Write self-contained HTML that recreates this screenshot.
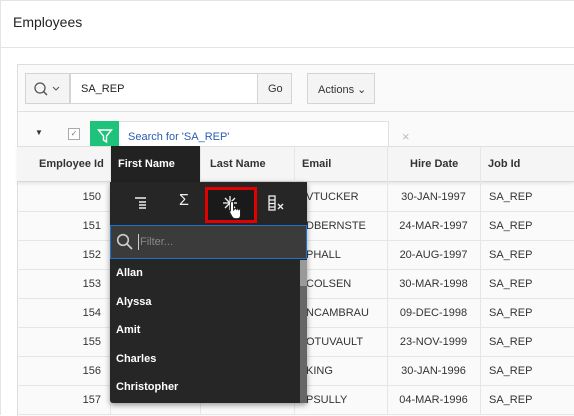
<!DOCTYPE html>
<html><head><style>
body{margin:0;width:574px;height:415px;overflow:hidden;background:#fff;font-family:"Liberation Sans",sans-serif;font-size:11px;color:#333;position:relative}
.a{position:absolute}
.t{white-space:nowrap}
</style></head><body>
<div class="a" style="left:0;top:0;width:574px;height:1px;background:#e4e4e4"></div>
<div class="a" style="left:0;top:0;width:1px;height:415px;background:#e4e4e4"></div>
<div class="a t" style="left:13px;top:14px;font-size:14px;color:#222">Employees</div>
<div class="a" style="left:0;top:47px;width:574px;height:1px;background:#e4e4e4"></div>
<div class="a" style="left:17px;top:64px;width:557px;height:351px;border-left:1px solid #ddd;border-top:1px solid #ddd;background:#fafafa"></div>
<div class="a" style="left:25px;top:73px;width:45px;height:31px;background:#f4f4f4;border:1px solid #d4d4d4;box-sizing:border-box"></div>
<svg class="a" style="left:33px;top:81px" width="30" height="16"><circle cx="7" cy="7" r="5" fill="none" stroke="#555" stroke-width="1.3"/><line x1="10.5" y1="10.5" x2="14" y2="14" stroke="#555" stroke-width="1.5"/><polyline points="20,6 23,9 26,6" fill="none" stroke="#555" stroke-width="1"/></svg>
<div class="a" style="left:70px;top:73px;width:188px;height:31px;background:#fff;border:1px solid #d4d4d4;box-sizing:border-box"></div>
<div class="a t" style="left:81px;top:83px;font-size:11px;color:#222">SA_REP</div>
<div class="a" style="left:257px;top:73px;width:35px;height:31px;background:#f4f4f4;border:1px solid #d4d4d4;box-sizing:border-box"></div>
<div class="a t" style="left:268px;top:83px">Go</div>
<div class="a" style="left:307px;top:73px;width:68px;height:31px;background:#f4f4f4;border:1px solid #d4d4d4;box-sizing:border-box"></div>
<div class="a t" style="left:318px;top:83px">Actions &#8964;</div>
<div class="a" style="left:17px;top:111px;width:557px;height:1px;background:#e0e0e0"></div>
<div class="a t" style="left:35px;top:128px;font-size:8px;color:#333">&#9660;</div>
<div class="a" style="left:68px;top:128px;width:12px;height:12px;border:1px solid #aaa;box-sizing:border-box;background:#fff;font-size:8px;line-height:10px;text-align:center;color:#777">&#10003;</div>
<div class="a" style="left:90px;top:121px;width:29px;height:30px;background:#1fc27a"></div>
<svg class="a" style="left:97px;top:128px" width="16" height="16"><path d="M1.5 2h13l-5 6v6l-3-2v-4z" fill="none" stroke="#fff" stroke-width="1.4"/></svg>
<div class="a" style="left:119px;top:121px;width:270px;height:30px;background:#fff;border:1px solid #e0e0e0;border-left:none;box-sizing:border-box"></div>
<div class="a t" style="left:128px;top:131px;color:#2a5db0">Search for 'SA_REP'</div>
<div class="a t" style="left:402px;top:129px;color:#bbb;font-size:13px">&#215;</div>
<div class="a" style="left:17px;top:146px;width:557px;height:36px;background:#f5f5f5;border-top:1px solid #e0e0e0;border-bottom:1px solid #d8d8d8;box-sizing:border-box;box-shadow:0 2px 3px rgba(0,0,0,.08)"></div>
<div class="a" style="left:110px;top:146px;width:90px;height:36px;background:#222"></div>
<div class="a t" style="left:39px;top:158px;font-weight:bold;color:#333">Employee Id</div>
<div class="a t" style="left:118px;top:158px;font-weight:bold;color:#fff">First Name</div>
<div class="a t" style="left:210px;top:158px;font-weight:bold">Last Name</div>
<div class="a t" style="left:302px;top:158px;font-weight:bold">Email</div>
<div class="a t" style="left:410px;top:158px;font-weight:bold">Hire Date</div>
<div class="a t" style="left:488px;top:158px;font-weight:bold">Job Id</div>
<div class="a" style="left:110px;top:146px;width:1px;height:269px;background:#e6e6e6"></div>
<div class="a" style="left:200px;top:146px;width:1px;height:269px;background:#e6e6e6"></div>
<div class="a" style="left:294px;top:146px;width:1px;height:269px;background:#e6e6e6"></div>
<div class="a" style="left:387px;top:146px;width:1px;height:269px;background:#e6e6e6"></div>
<div class="a" style="left:480px;top:146px;width:1px;height:269px;background:#e6e6e6"></div>
<div class="a" style="left:17px;top:211px;width:557px;height:1px;background:#e6e6e6"></div>
<div class="a" style="left:17px;top:240px;width:557px;height:1px;background:#e6e6e6"></div>
<div class="a" style="left:17px;top:269px;width:557px;height:1px;background:#e6e6e6"></div>
<div class="a" style="left:17px;top:298px;width:557px;height:1px;background:#e6e6e6"></div>
<div class="a" style="left:17px;top:327px;width:557px;height:1px;background:#e6e6e6"></div>
<div class="a" style="left:17px;top:356px;width:557px;height:1px;background:#e6e6e6"></div>
<div class="a" style="left:17px;top:385px;width:557px;height:1px;background:#e6e6e6"></div>
<div class="a" style="left:17px;top:414px;width:557px;height:1px;background:#e6e6e6"></div>
<div class="a" style="left:18px;top:182px;width:556px;height:233px;background:#fff;z-index:-1"></div>

<div class="a t" style="left:80px;top:191px;width:21px;text-align:right">150</div>
<div class="a t" style="left:80px;top:220px;width:21px;text-align:right">151</div>
<div class="a t" style="left:80px;top:249px;width:21px;text-align:right">152</div>
<div class="a t" style="left:80px;top:278px;width:21px;text-align:right">153</div>
<div class="a t" style="left:80px;top:307px;width:21px;text-align:right">154</div>
<div class="a t" style="left:80px;top:336px;width:21px;text-align:right">155</div>
<div class="a t" style="left:80px;top:365px;width:21px;text-align:right">156</div>
<div class="a t" style="left:80px;top:394px;width:21px;text-align:right">157</div>

<div class="a t" style="left:306px;top:191px">VTUCKER</div>
<div class="a t" style="left:306px;top:220px">DBERNSTE</div>
<div class="a t" style="left:306px;top:249px">PHALL</div>
<div class="a t" style="left:306px;top:278px">COLSEN</div>
<div class="a t" style="left:306px;top:307px">NCAMBRAU</div>
<div class="a t" style="left:306px;top:336px">OTUVAULT</div>
<div class="a t" style="left:306px;top:365px">KING</div>
<div class="a t" style="left:306px;top:394px">PSULLY</div>

<div class="a t" style="left:387px;top:191px;width:93px;text-align:center">30-JAN-1997</div>
<div class="a t" style="left:387px;top:220px;width:93px;text-align:center">24-MAR-1997</div>
<div class="a t" style="left:387px;top:249px;width:93px;text-align:center">20-AUG-1997</div>
<div class="a t" style="left:387px;top:278px;width:93px;text-align:center">30-MAR-1998</div>
<div class="a t" style="left:387px;top:307px;width:93px;text-align:center">09-DEC-1998</div>
<div class="a t" style="left:387px;top:336px;width:93px;text-align:center">23-NOV-1999</div>
<div class="a t" style="left:387px;top:365px;width:93px;text-align:center">30-JAN-1996</div>
<div class="a t" style="left:387px;top:394px;width:93px;text-align:center">04-MAR-1996</div>

<div class="a t" style="left:489px;top:191px">SA_REP</div>
<div class="a t" style="left:489px;top:220px">SA_REP</div>
<div class="a t" style="left:489px;top:249px">SA_REP</div>
<div class="a t" style="left:489px;top:278px">SA_REP</div>
<div class="a t" style="left:489px;top:307px">SA_REP</div>
<div class="a t" style="left:489px;top:336px">SA_REP</div>
<div class="a t" style="left:489px;top:365px">SA_REP</div>
<div class="a t" style="left:489px;top:394px">SA_REP</div>

<div class="a" style="left:110px;top:182px;width:197px;height:221px;background:#262626;box-shadow:0 2px 6px rgba(0,0,0,.4);border-radius:0 0 3px 3px"></div>
<svg class="a" style="left:132px;top:196px" width="16" height="14"><g stroke="#eee" stroke-width="1.5"><line x1="3" y1="2" x2="14" y2="2"/><line x1="7" y1="6" x2="14" y2="6"/><line x1="7" y1="9" x2="14" y2="9"/><line x1="7" y1="12" x2="14" y2="12"/></g></svg>
<div class="a t" style="left:179px;top:192px;color:#eee;font-size:16px">&#931;</div>
<div class="a" style="left:205px;top:187px;width:52px;height:36px;border:3px solid #e30000;box-sizing:border-box;background:#1a1a1a"></div>
<svg class="a" style="left:222px;top:195px" width="16" height="16"><g stroke="#eee" stroke-width="1.3"><line x1="8" y1="1" x2="8" y2="15"/><line x1="1" y1="8" x2="15" y2="8"/><line x1="3" y1="3" x2="13" y2="13"/><line x1="13" y1="3" x2="3" y2="13"/></g></svg>
<svg class="a" style="left:228px;top:200px" width="16" height="20"><path d="M4 1.5c1 0 1.5.6 1.5 1.5v7l1-1c.3-.6 1.8-.6 2 .3.3-.6 1.8-.6 2 .3.3-.5 1.8-.5 2 .5v5c0 2-1 3.5-3 3.5H7c-1.5 0-2.5-1-3.3-2.5L1.5 12c-.4-.8.6-1.6 1.300-.9L2.5 11V3c0-.9.6-1.5 1.5-1.5z" fill="#fff" stroke="#222" stroke-width="1"/></svg>
<svg class="a" style="left:268px;top:195px" width="18" height="16"><g fill="none" stroke="#eee" stroke-width="1.3"><rect x="1" y="1" width="6" height="14"/><line x1="1" y1="5" x2="7" y2="5"/><line x1="1" y1="8.5" x2="7" y2="8.5"/><line x1="1" y1="12" x2="7" y2="12"/><line x1="10" y1="9" x2="15" y2="14"/><line x1="15" y1="9" x2="10" y2="14"/></g></svg>
<div class="a" style="left:110px;top:225px;width:197px;height:34px;background:#3b3b3b;border:1px solid #1e73d2;box-sizing:border-box"></div>
<svg class="a" style="left:116px;top:233px" width="18" height="18"><circle cx="7" cy="7" r="5.3" fill="none" stroke="#ccc" stroke-width="1.6"/><line x1="11" y1="11" x2="16" y2="16" stroke="#ccc" stroke-width="1.8"/></svg>
<div class="a" style="left:138px;top:234px;width:1px;height:16px;background:#ccc"></div>
<div class="a t" style="left:140px;top:236px;color:#888">Filter...</div>
<div class="a" style="left:300px;top:260px;width:7px;height:143px;background:#666"></div>
<div class="a" style="left:300px;top:260px;width:7px;height:26px;background:#999"></div>
<div class="a t" style="left:116px;top:267px;color:#fff;font-weight:bold">Allan</div>
<div class="a t" style="left:116px;top:296px;color:#fff;font-weight:bold">Alyssa</div>
<div class="a t" style="left:116px;top:324px;color:#fff;font-weight:bold">Amit</div>
<div class="a t" style="left:116px;top:353px;color:#fff;font-weight:bold">Charles</div>
<div class="a t" style="left:116px;top:381px;color:#fff;font-weight:bold">Christopher</div>
</body></html>
